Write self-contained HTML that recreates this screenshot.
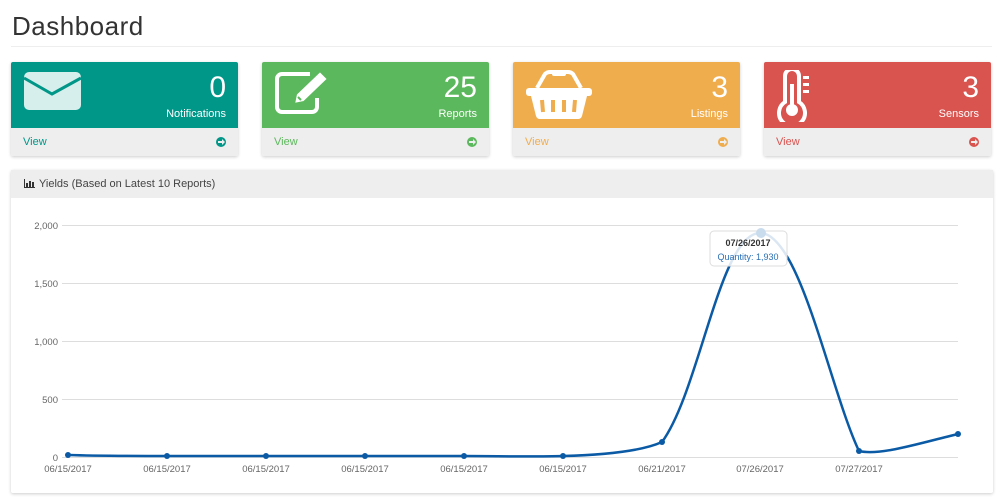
<!DOCTYPE html>
<html><head><style>
*{box-sizing:border-box;margin:0;padding:0}
body{width:1000px;height:500px;background:#fff;font-family:"Liberation Sans",sans-serif;overflow:hidden;position:relative}
h1{position:absolute;left:12px;top:11px;font-weight:normal;font-size:26px;color:#333;letter-spacing:0.5px}
.hr{position:absolute;left:11px;right:8px;top:46px;border-top:1px solid #eee}
.card{position:absolute;top:62px;width:227px;height:94px;box-shadow:0 1px 3px rgba(0,0,0,.2);border-radius:2px;overflow:hidden}
.card .top{height:66px;position:relative;color:#fff}
.card .num{position:absolute;right:12px;top:9px;font-size:30px;font-weight:300}
.card .lbl{position:absolute;right:12px;top:46px;font-size:11px}
.card .foot{height:28px;background:#eee;position:relative;font-size:11px}
.card .foot span{position:absolute;left:12px;top:8px}
.card .foot i{position:absolute;right:12px;top:9px;width:10px;height:10px;border-radius:50%}
.card svg{position:absolute;left:12px;top:8px}
.panel{position:absolute;left:11px;top:170px;width:982px;height:323px;box-shadow:0 1px 3px rgba(0,0,0,.2);border-radius:2px;background:#fff}
.ph{height:28px;background:#eee;font-size:11px;color:#444;padding:8px 0 0 28px;position:relative}
</style></head><body>
<h1>Dashboard</h1><div class="hr"></div>

<div class="card" style="left:11px"><div class="top" style="background:#009688">
<svg width="60" height="42" viewBox="0 0 60 42"><rect x="1" y="2" width="57" height="38" rx="5" fill="#d6efec"/><path d="M1 8 L29 24 L58 8" stroke="#009688" stroke-width="3" fill="none"/></svg>
<div class="num">0</div><div class="lbl">Notifications</div></div>
<div class="foot"><span style="color:#009688">View</span><i style="background:#009688"></i></div></div>

<div class="card" style="left:262px"><div class="top" style="background:#5cb85c">
<svg width="60" height="45" viewBox="0 0 60 45"><path d="M36 4 H8 a5 5 0 0 0 -5 5 V37 a5 5 0 0 0 5 5 H38 a5 5 0 0 0 5 -5 V28" fill="none" stroke="#fff" stroke-width="4"/><path d="M20 34 L22 24 L46 1 L54 9 L30 32 Z" fill="#fff" stroke="#5cb85c" stroke-width="2"/><path d="M24 27 L27 30" stroke="#5cb85c" stroke-width="2"/></svg>
<div class="num">25</div><div class="lbl">Reports</div></div>
<div class="foot"><span style="color:#5cb85c">View</span><i style="background:#5cb85c"></i></div></div>

<div class="card" style="left:513px"><div class="top" style="background:#f0ad4e">
<svg width="70" height="50" viewBox="0 0 70 50"><path d="M12 18 L20 4 Q22 2 25 2 H43 Q46 2 48 4 L56 18" stroke="#fff" stroke-width="4" fill="none"/><rect x="27" y="0" width="14" height="6" rx="2" fill="#fff"/><rect x="1" y="18" width="66" height="8" rx="3" fill="#fff"/><path d="M6 26 H62 L57 46 Q56 49 53 49 H15 Q12 49 11 46 Z" fill="#fff"/><g stroke="#f0ad4e" stroke-width="4"><line x1="17" y1="30" x2="18" y2="42"/><line x1="28" y1="30" x2="28" y2="42"/><line x1="39" y1="30" x2="39" y2="42"/><line x1="50" y1="30" x2="49" y2="42"/></g></svg>
<div class="num">3</div><div class="lbl">Listings</div></div>
<div class="foot"><span style="color:#f0ad4e">View</span><i style="background:#f0ad4e"></i></div></div>

<div class="card" style="left:764px"><div class="top" style="background:#d9534f">
<svg width="40" height="52" viewBox="0 0 40 52"><path d="M9 6 a7 7 0 0 1 14 0 V32 a13 13 0 1 1 -14 0 Z" fill="none" stroke="#fff" stroke-width="4"/><rect x="14" y="14" width="4" height="22" fill="#fff"/><circle cx="16" cy="40" r="6" fill="#fff"/><g fill="#fff"><rect x="27" y="6" width="6" height="3"/><rect x="27" y="13" width="6" height="3"/><rect x="27" y="20" width="6" height="3"/></g></svg>
<div class="num">3</div><div class="lbl">Sensors</div></div>
<div class="foot"><span style="color:#d9534f">View</span><i style="background:#d9534f"></i></div></div>

<div class="panel"><div class="ph"><svg style="position:absolute;left:13px;top:9px" width="11" height="9"><g fill="#333"><rect x="0" y="0" width="1" height="9"/><rect x="0" y="8" width="11" height="1"/><rect x="2" y="4" width="2" height="4"/><rect x="5" y="2" width="2" height="6"/><rect x="8" y="3" width="2" height="5"/></g></svg>Yields (Based on Latest 10 Reports)</div></div>

<svg style="position:absolute;left:0;top:0" width="1000" height="500">
<g stroke="#ddd" stroke-width="1"><line x1="62" y1="225.5" x2="958" y2="225.5"/><line x1="62" y1="283.5" x2="958" y2="283.5"/><line x1="62" y1="341.5" x2="958" y2="341.5"/><line x1="62" y1="399.5" x2="958" y2="399.5"/><line x1="62" y1="457.5" x2="958" y2="457.5"/></g>
<g font-family="Liberation Sans" font-size="9.5" fill="#666" text-anchor="end"><text x="58" y="229">2,000</text><text x="58" y="287">1,500</text><text x="58" y="345">1,000</text><text x="58" y="403">500</text><text x="58" y="461">0</text></g>
<g font-family="Liberation Sans" font-size="9.5" fill="#666" text-anchor="middle"><text x="68" y="472">06/15/2017</text><text x="167" y="472">06/15/2017</text><text x="266" y="472">06/15/2017</text><text x="365" y="472">06/15/2017</text><text x="464" y="472">06/15/2017</text><text x="563" y="472">06/15/2017</text><text x="662" y="472">06/21/2017</text><text x="760" y="472">07/26/2017</text><text x="859" y="472">07/27/2017</text></g>
<path d="M68 455 C100 456,130 456,167 456 S230 456,266 456 S330 456,365 456 S430 456,464 456 S530 457,563 456 C600 455,640 452,662 442 C700 390,720 233,760 233 C800 233,830 390,859 451 C880 456,920 443,958 434" stroke="#0a5aa5" stroke-width="2.5" fill="none"/>
<g fill="#0a5aa5"><circle cx="68" cy="455" r="3"/><circle cx="167" cy="456" r="3"/><circle cx="266" cy="456" r="3"/><circle cx="365" cy="456" r="3"/><circle cx="464" cy="456" r="3"/><circle cx="563" cy="456" r="3"/><circle cx="662" cy="442" r="3"/><circle cx="859" cy="451" r="3"/><circle cx="958" cy="434" r="3"/></g>
<rect x="710" y="231" width="77" height="35" rx="4" fill="rgba(255,255,255,0.85)" stroke="#ddd"/>
<circle cx="761" cy="233" r="5" fill="#c9dcee"/>
<text x="748" y="246" font-family="Liberation Sans" font-size="9" font-weight="bold" fill="#333" text-anchor="middle">07/26/2017</text>
<text x="748" y="260" font-family="Liberation Sans" font-size="9" fill="#2a6fb5" text-anchor="middle">Quantity: 1,930</text>
</svg>
<svg style="position:absolute;left:0;top:0" width="1000" height="200">
<g fill="#eee"><path d="M218 141 h4 v-2 l3 3 -3 3 v-2 h-4z"/><path d="M469 141 h4 v-2 l3 3 -3 3 v-2 h-4z"/><path d="M720 141 h4 v-2 l3 3 -3 3 v-2 h-4z"/><path d="M971 141 h4 v-2 l3 3 -3 3 v-2 h-4z"/></g>
</svg>
</body></html>
